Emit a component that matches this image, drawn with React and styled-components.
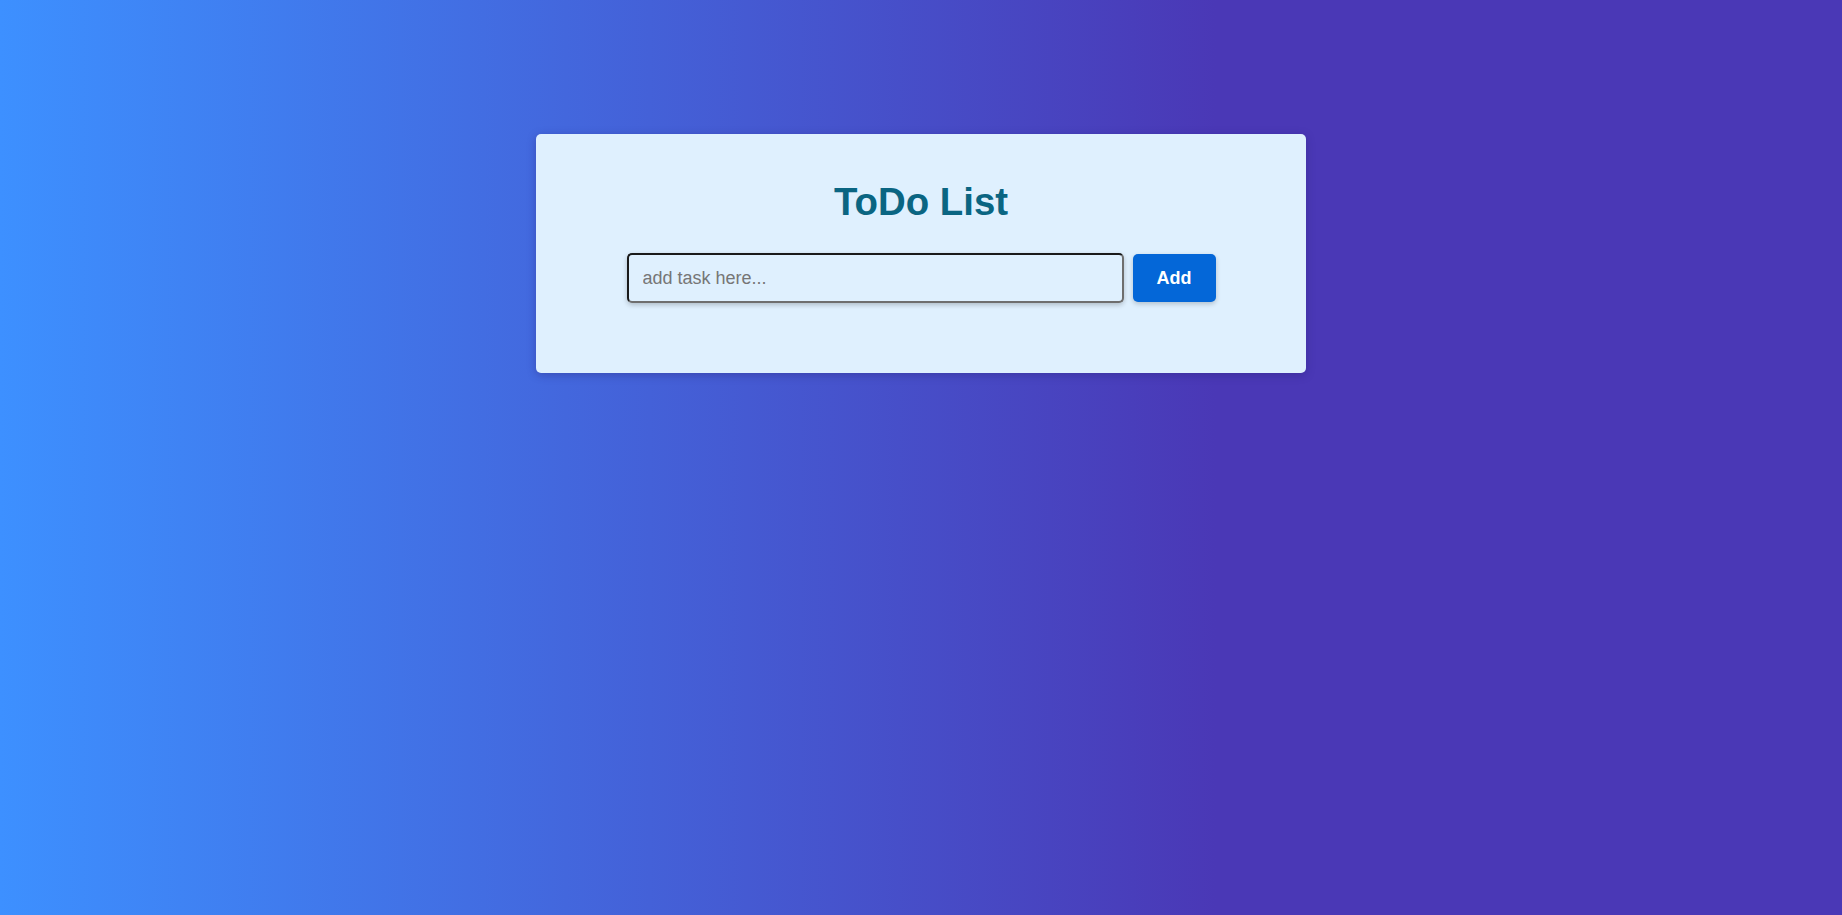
import React, { useState } from "react";
import styled, { createGlobalStyle } from "styled-components";

const GlobalStyle = createGlobalStyle`
  html, body {
    margin: 0;
    padding: 0;
    height: 100%;
  }
  body {
    font-family: "Liberation Sans", Arial, sans-serif;
    background: linear-gradient(to right, #3d90ff 0%, #4a38b6 66%, #4a38b6 100%);
    min-height: 915px;
  }
`;

const Page = styled.main`
  min-height: 915px;
  display: flex;
  justify-content: center;
  align-items: flex-start;
  padding-top: 134px;
  box-sizing: border-box;
`;

const Card = styled.section`
  width: 770px;
  min-height: 239px;
  box-sizing: border-box;
  padding: 20px 20px 64px;
  background: #dff0fe;
  border-radius: 5px;
  box-shadow: 0 2px 8px rgba(40, 30, 110, 0.35);
  display: flex;
  flex-direction: column;
  align-items: center;
`;

const Title = styled.h1`
  margin: 25.7px 0 29.5px;
  font-family: "Liberation Sans", Arial, sans-serif;
  font-size: 38.4px;
  font-weight: 700;
  color: #0a6582;
  line-height: normal;
`;

const Row = styled.form`
  display: flex;
  align-items: center;
  gap: 9px;
`;

const TaskInput = styled.input`
  width: 497px;
  height: 50px;
  box-sizing: border-box;
  padding: 0 14px;
  font-family: "Liberation Sans", Arial, sans-serif;
  font-size: 18px;
  color: #222;
  background: #dff0fe;
  border: 2px solid;
  border-color: #1a1a1a #6e6e6e #6e6e6e #1a1a1a;
  border-radius: 5px;
  box-shadow: 0 2px 5px rgba(0, 0, 0, 0.22);
  outline: none;

  &::placeholder {
    color: #767676;
  }
`;

const AddButton = styled.button`
  width: 83px;
  height: 48px;
  border: none;
  border-radius: 5px;
  background: #0467d8;
  color: #ffffff;
  font-family: "Liberation Sans", Arial, sans-serif;
  font-size: 18px;
  font-weight: 700;
  cursor: pointer;
  box-shadow: 0 2px 5px rgba(0, 0, 0, 0.2);
`;

export default function App() {
  const [task, setTask] = useState("");
  return (
    <>
      <GlobalStyle />
      <Page>
        <Card>
          <Title>ToDo List</Title>
          <Row onSubmit={(e) => e.preventDefault()}>
            <TaskInput
              type="text"
              placeholder="add task here..."
              value={task}
              onChange={(e) => setTask(e.target.value)}
            />
            <AddButton type="submit">Add</AddButton>
          </Row>
        </Card>
      </Page>
    </>
  );
}
